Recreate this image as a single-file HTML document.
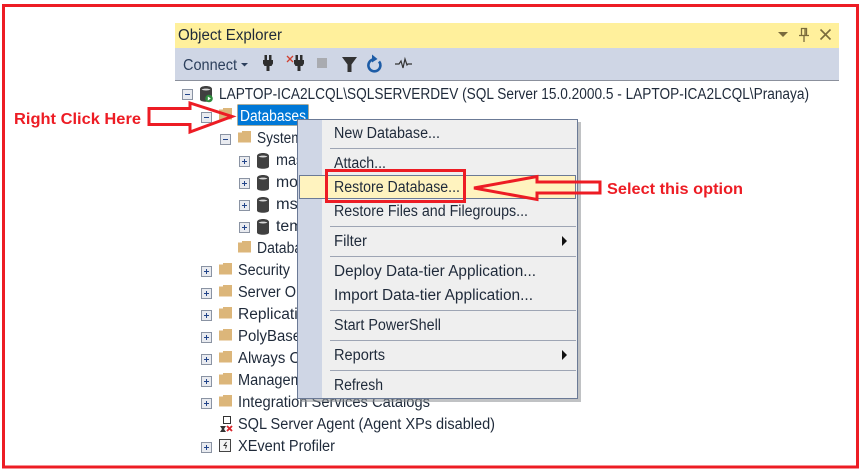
<!DOCTYPE html>
<html><head><meta charset="utf-8"><style>
html,body{margin:0;padding:0;background:#fff;width:864px;height:474px;overflow:hidden}
svg{display:block}
text{font-family:"Liberation Sans",sans-serif;font-size:15.5px;fill:#1f2a3a}
.r{fill:#ed1c24;font-weight:bold;font-size:16px}
</style></head><body>
<svg width="864" height="474" viewBox="0 0 864 474" xmlns="http://www.w3.org/2000/svg">
<defs>
<g id="plus"><rect x=".5" y=".5" width="10" height="10" fill="#e9ebf0" stroke="#8a93a3"/><path d="M3 5.500h5M5.500 3v5" stroke="#23458a" stroke-width="1"/></g>
<g id="minus"><rect x=".5" y=".5" width="10" height="10" fill="#e9ebf0" stroke="#8a93a3"/><path d="M3 5.500h5" stroke="#23458a" stroke-width="1"/></g>
<path id="folder" d="M0 1.500h4V0h9v11.500H0z" fill="#dcb67a"/>
<g id="db"><path d="M0 3c0-4 12-4 12 0v10.500c0 3-12 3-12 0z" fill="#404040"/><path d="M1.500 3.500c2 1.300 7 1.300 9 0-2-1.200-7-1.200-9 0z" fill="#d8d8d8"/></g>
<path id="plug" d="M1.500 0h2.500v5H1.500zM6 0h2.500v5H6zM0 5h10v3.500L8.500 11H6.500v5h-3v-5H1.500L0 8.500z" fill="#2e2e2e"/>
</defs>
<rect x="3.500" y="5.500" width="854" height="461.500" fill="none" stroke="#ed1c24" stroke-width="3"/>

<rect x="175" y="23" width="664" height="25" fill="#fff09c"/>
<rect x="175" y="48" width="664" height="32" fill="#cfd6e5"/>
<rect x="175" y="80" width="664" height="1" fill="#8b909c"/>
<text x="178" y="40" textLength="104" lengthAdjust="spacingAndGlyphs">Object Explorer</text>
<path d="M778 32h10l-5 5z" fill="#7a6b3c"/>
<path d="M801.500 28.500h5v7h-5zM799 35.500h10M804 36v6M805 29v6" fill="none" stroke="#7a6b3c" stroke-width="1.300"/>
<path d="M820.500 29.500l10 10M830.500 29.500l-10 10" stroke="#7a6b3c" stroke-width="1.600"/>

<text x="183" y="70" textLength="54" lengthAdjust="spacingAndGlyphs" style="fill:#2c3f5c">Connect</text>
<path d="M241 63h7l-3.500 3.500z" fill="#2c3f5c"/>
<use href="#plug" x="263" y="55"/>
<path d="M287 56l6 6M293 56l-6 6" stroke="#d04030" stroke-width="1.300"/>
<use href="#plug" x="294" y="55"/>
<rect x="317" y="58" width="10" height="10" fill="#a9abb0"/>
<path d="M342 57h15l-5.500 7.500V72h-4v-7.500z" fill="#333"/>
<path d="M373 59.500a6 6 0 1 0 6 2" fill="none" stroke="#1d5ca6" stroke-width="2.600"/>
<path d="M372 54.500l5.500 4.500-5.500 3.500z" fill="#1d5ca6"/>
<path d="M395 64h4l2-3 2 7 2-9 2 6 1-1h4" fill="none" stroke="#333" stroke-width="1.200"/>

<use href="#minus" x="182" y="89"/>
<use href="#db" x="200" y="86"/>
<circle cx="209" cy="98.500" r="3.800" fill="#2d8c3c"/><path d="M207.800 96.500l3 2-3 2z" fill="#fff"/>
<text x="219" y="99" textLength="590" lengthAdjust="spacingAndGlyphs">LAPTOP-ICA2LCQL\SQLSERVERDEV (SQL Server 15.0.2000.5 - LAPTOP-ICA2LCQL\Pranaya)</text>

<use href="#minus" x="201" y="112"/>
<use href="#folder" x="219" y="108"/>
<rect x="237.500" y="104.500" width="71" height="21" fill="#0078d7" stroke="#d9a050" stroke-dasharray="1 1"/>
<text x="240" y="121" textLength="66" lengthAdjust="spacingAndGlyphs" style="fill:#fff">Databases</text>

<use href="#minus" x="220" y="134"/><use href="#folder" x="238" y="131"/>
<text x="257" y="143" textLength="115" lengthAdjust="spacingAndGlyphs">System Databases</text>
<use href="#plus" x="239" y="156"/><use href="#db" x="257" y="153"/><text x="276" y="165" textLength="44" lengthAdjust="spacingAndGlyphs">master</text>
<use href="#plus" x="239" y="178"/><use href="#db" x="257" y="175"/><text x="276" y="187" textLength="43" lengthAdjust="spacingAndGlyphs">model</text>
<use href="#plus" x="239" y="200"/><use href="#db" x="257" y="197"/><text x="276" y="209" textLength="40" lengthAdjust="spacingAndGlyphs">msdb</text>
<use href="#plus" x="239" y="222"/><use href="#db" x="257" y="219"/><text x="276" y="231" textLength="53" lengthAdjust="spacingAndGlyphs">tempdb</text>
<use href="#folder" x="238" y="241"/><text x="257" y="253" textLength="130" lengthAdjust="spacingAndGlyphs">Database Snapshots</text>

<use href="#plus" x="201" y="266"/><use href="#folder" x="219" y="263"/><text x="238" y="275" textLength="52" lengthAdjust="spacingAndGlyphs">Security</text>
<use href="#plus" x="201" y="288"/><use href="#folder" x="219" y="285"/><text x="238" y="297" textLength="96" lengthAdjust="spacingAndGlyphs">Server Objects</text>
<use href="#plus" x="201" y="310"/><use href="#folder" x="219" y="307"/><text x="238" y="319" textLength="77" lengthAdjust="spacingAndGlyphs">Replication</text>
<use href="#plus" x="201" y="332"/><use href="#folder" x="219" y="329"/><text x="238" y="341" textLength="63" lengthAdjust="spacingAndGlyphs">PolyBase</text>
<use href="#plus" x="201" y="354"/><use href="#folder" x="219" y="351"/><text x="238" y="363" textLength="180" lengthAdjust="spacingAndGlyphs">Always On High Availability</text>
<use href="#plus" x="201" y="376"/><use href="#folder" x="219" y="373"/><text x="238" y="385" textLength="85" lengthAdjust="spacingAndGlyphs">Management</text>
<use href="#plus" x="201" y="398"/><use href="#folder" x="219" y="395"/><text x="238" y="407" textLength="192" lengthAdjust="spacingAndGlyphs">Integration Services Catalogs</text>
<rect x="223.500" y="416.500" width="7" height="7" fill="#fff" stroke="#333"/><path d="M220 432h6l-2-3 2-3h-6l2 3z" fill="#333"/><path d="M227 426l5 5M232 426l-5 5" stroke="#d8262c" stroke-width="1.800"/>
<text x="238" y="429" textLength="257" lengthAdjust="spacingAndGlyphs">SQL Server Agent (Agent XPs disabled)</text>
<use href="#plus" x="201" y="442"/>
<rect x="219.500" y="439.500" width="11" height="12" fill="#f4f4f4" stroke="#444"/><path d="M226.500 442l-2.500 3.500h2.500l-1 3" fill="none" stroke="#333"/>
<text x="238" y="451" textLength="97" lengthAdjust="spacingAndGlyphs">XEvent Profiler</text>

<rect x="300" y="122" width="281" height="280" fill="#8d8f94" opacity=".55"/>
<rect x="297.500" y="119.500" width="280" height="279" fill="#efefef" stroke="#6b7a96"/>
<rect x="298" y="120" width="24" height="278" fill="#cfd6e5"/>
<g fill="#9ea5b4"><rect x="330" y="148" width="246" height="1"/><rect x="330" y="226" width="246" height="1"/><rect x="330" y="256" width="246" height="1"/><rect x="330" y="310" width="246" height="1"/><rect x="330" y="340" width="246" height="1"/><rect x="330" y="370" width="246" height="1"/></g>
<rect x="299.500" y="175.500" width="276" height="23" fill="#fff3bf" stroke="#6b7a96"/>
<text x="334" y="138" textLength="106" lengthAdjust="spacingAndGlyphs">New Database...</text>
<text x="334" y="168" textLength="52" lengthAdjust="spacingAndGlyphs">Attach...</text>
<text x="334" y="192" textLength="126" lengthAdjust="spacingAndGlyphs">Restore Database...</text>
<text x="334" y="216" textLength="194" lengthAdjust="spacingAndGlyphs">Restore Files and Filegroups...</text>
<text x="334" y="246" textLength="33" lengthAdjust="spacingAndGlyphs">Filter</text>
<path d="M562 236l5 5-5 5z" fill="#111"/>
<text x="334" y="276" textLength="202" lengthAdjust="spacingAndGlyphs">Deploy Data-tier Application...</text>
<text x="334" y="300" textLength="199" lengthAdjust="spacingAndGlyphs">Import Data-tier Application...</text>
<text x="334" y="330" textLength="107" lengthAdjust="spacingAndGlyphs">Start PowerShell</text>
<text x="334" y="360" textLength="51" lengthAdjust="spacingAndGlyphs">Reports</text>
<path d="M562 350l5 5-5 5z" fill="#111"/>
<text x="334" y="390" textLength="49" lengthAdjust="spacingAndGlyphs">Refresh</text>

<rect x="326.500" y="170.500" width="138" height="31" fill="none" stroke="#ed1c24" stroke-width="3"/>
<path d="M600 182H537V176.500L474 188L537 199.500V193H600z" fill="none" stroke="#ed1c24" stroke-width="3"/>
<path d="M149 108.500H190V103L232 116.500L190 132V124.500H149z" fill="none" stroke="#ed1c24" stroke-width="3"/>
<text class="r" x="14" y="124" textLength="127" lengthAdjust="spacingAndGlyphs">Right Click Here</text>
<text class="r" x="607" y="194" textLength="136" lengthAdjust="spacingAndGlyphs">Select this option</text>
</svg>
</body></html>
